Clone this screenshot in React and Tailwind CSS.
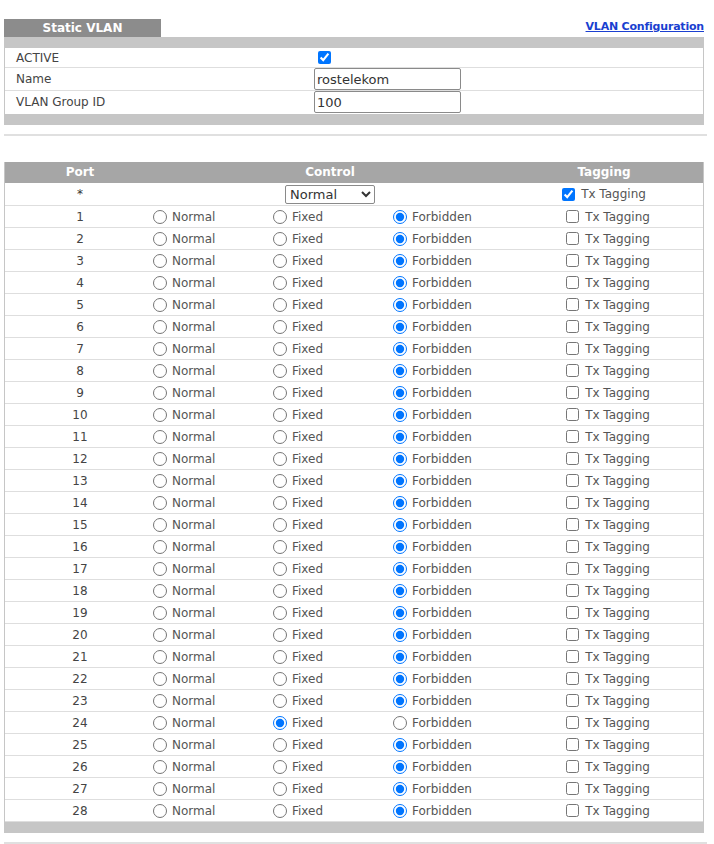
import { useState } from 'react';

const ports = Array.from({ length: 28 }, (_, i) => i + 1);

export default function App() {
  const [active, setActive] = useState(true);
  const [name, setName] = useState('rostelekom');
  const [vid, setVid] = useState('100');
  const [control, setControl] = useState(() => {
    const c = {};
    ports.forEach((p) => (c[p] = p === 24 ? 'fixed' : 'forbidden'));
    return c;
  });
  const [tagging, setTagging] = useState({});

  return (
    <div className="min-h-screen bg-white pt-[18px] px-1 text-[13px] text-[#333]" style={{ fontFamily: '"DejaVu Sans", sans-serif' }}>
      {/* Title tab + link */}
      <div className="flex items-end justify-between w-[700px]">
        <div className="w-[157px] h-[18px] bg-[#8c8c8c] text-white font-bold text-[12px] leading-[18px] text-center">
          Static VLAN
        </div>
        <a href="#" className="text-[#1a3fd0] font-bold text-[11px] underline leading-[18px] mb-[1px] tracking-[-0.2px]">
          VLAN Configuration
        </a>
      </div>

      {/* Static VLAN form */}
      <div className="w-[700px] border-x border-[#c6c6c6]">
        <div className="h-[11px] bg-[#c6c6c6]" />
        <div className="flex h-[20px] border-b border-[#dedede]">
          <div className="w-[309px] pl-[11px] leading-[20px] text-[12px] text-[#444]">ACTIVE</div>
          <div className="flex items-center pl-[4px]">
            <input type="checkbox" checked={active} onChange={(e) => setActive(e.target.checked)} className="w-[13px] h-[13px] m-0" />
          </div>
        </div>
        <div className="flex h-[23px] border-b border-[#dedede]">
          <div className="w-[309px] pl-[11px] leading-[22px] text-[12px] text-[#444]">Name</div>
          <input
            value={name}
            onChange={(e) => setName(e.target.value)}
            className="w-[147px] h-[22px] border border-[#8a8a8a] rounded-[2px] px-[2px] text-[13px] text-[#333]"
          />
        </div>
        <div className="flex h-[23px]">
          <div className="w-[309px] pl-[11px] leading-[22px] text-[12px] text-[#444]">VLAN Group ID</div>
          <input
            value={vid}
            onChange={(e) => setVid(e.target.value)}
            className="w-[147px] h-[22px] border border-[#8a8a8a] rounded-[2px] px-[2px] text-[13px] text-[#333]"
          />
        </div>
        <div className="h-[11px] bg-[#c6c6c6]" />
      </div>

      <div className="w-[703px] h-[2px] bg-[#e0e0e0] mt-[9px]" />

      {/* Port table */}
      <div className="w-[700px] border-x border-[#c6c6c6] mt-[26px]">
        <div className="flex h-[21px] bg-[#a6a6a6] text-white font-bold text-[12px] leading-[21px]">
          <div className="w-[150px] text-center">Port</div>
          <div className="w-[350px] text-center">Control</div>
          <div className="flex-1 text-center">Tagging</div>
        </div>
        <div className="flex h-[23px] items-center border-b border-[#dedede]">
          <div className="w-[150px] text-center text-[12px]">*</div>
          <div className="w-[350px] flex justify-center">
            <select className="w-[90px] h-[19px] border border-[#8a8a8a] rounded-[2px] text-[13px] text-[#333] bg-white">
              <option>Normal</option>
              <option>Fixed</option>
              <option>Forbidden</option>
            </select>
          </div>
          <div className="flex-1 flex justify-center items-center gap-[6px] text-[12px] text-[#555]">
            <input type="checkbox" defaultChecked className="w-[13px] h-[13px] m-0" />
            <span>Tx Tagging</span>
          </div>
        </div>
        {ports.map((p) => (
          <div key={p} className="flex h-[22px] items-center border-b border-[#dedede] text-[12px] text-[#555]">
            <div className="w-[148px] text-center text-[#444] pl-[2px]">{p}</div>
            {['normal', 'fixed', 'forbidden'].map((v) => (
              <label key={v} className="w-[120px] flex items-center gap-[5px] last:w-[112px]">
                <input
                  type="radio"
                  name={`port-${p}`}
                  checked={control[p] === v}
                  onChange={() => setControl({ ...control, [p]: v })}
                  className="w-[14px] h-[14px] m-0"
                />
                <span>{v === 'normal' ? 'Normal' : v === 'fixed' ? 'Fixed' : 'Forbidden'}</span>
              </label>
            ))}
            <div className="flex-1 flex justify-center items-center gap-[6px]">
              <input
                type="checkbox"
                checked={!!tagging[p]}
                onChange={(e) => setTagging({ ...tagging, [p]: e.target.checked })}
                className="w-[13px] h-[13px] m-0"
              />
              <span>Tx Tagging</span>
            </div>
          </div>
        ))}
        <div className="h-[11px] bg-[#c6c6c6]" />
      </div>

      <div className="w-[703px] h-[2px] bg-[#e0e0e0] mt-[9px]" />
    </div>
  );
}
